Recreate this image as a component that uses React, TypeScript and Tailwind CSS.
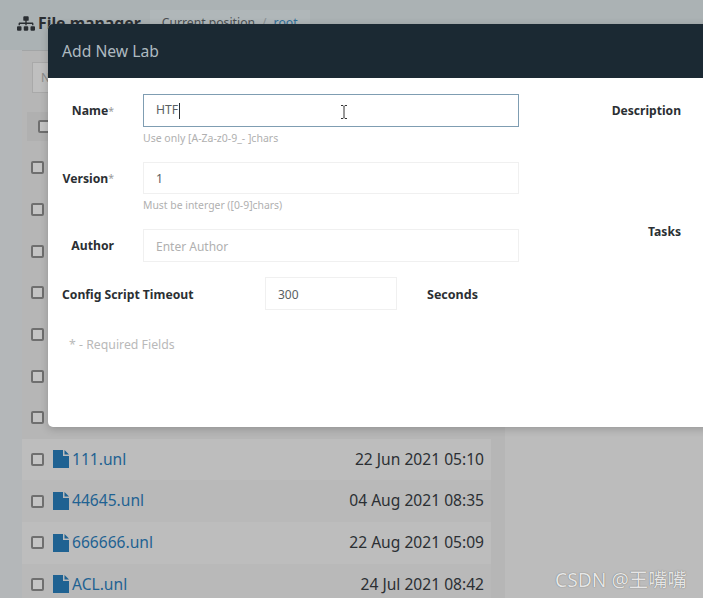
import { FaSitemap } from "react-icons/fa";

const files = [
  { name: "111.unl", date: "22 Jun 2021 05:10" },
  { name: "44645.unl", date: "04 Aug 2021 08:35" },
  { name: "666666.unl", date: "22 Aug 2021 05:09" },
  { name: "ACL.unl", date: "24 Jul 2021 08:42" },
];

function FileIcon() {
  return (
    <svg width="16" height="18" viewBox="0 0 16 18" className="shrink-0 fill-[#1f6292]">
      <path d="M0 0H10V6H16V18H0Z" />
      <path d="M11.5 0L16 4.5H11.5Z" />
    </svg>
  );
}

function Checkbox() {
  return <span className="block h-[13px] w-[13px] shrink-0 rounded-[2px] border-2 border-[#6f6f6f] bg-[#c4c4c4]" />;
}

function FieldLabel({ text, required }: { text: string; required?: boolean }) {
  return (
    <div className="flex h-[32px] w-[52px] shrink-0 items-center justify-end whitespace-nowrap pt-[2px] text-[12.2px] font-bold text-[#2b2f33]">
      {text}
      {required && <span className="text-[10.5px] font-normal text-[#9a9a9a]">*</span>}
    </div>
  );
}

export default function App() {
  return (
    <div className="relative h-[598px] w-[703px] overflow-hidden bg-[#b4b7b9] font-['Noto_Sans',sans-serif]">
      {/* page behind the dialog */}
      <div className="flex h-[50px] items-start gap-[9px] bg-[#abb2b4] pl-[17px] pt-[12px]">
        <div className="flex items-center gap-[3px] text-[#2a2e32]">
          <FaSitemap className="h-[17px] w-[18px]" />
          <span className="text-[15.8px] font-bold leading-[22px]">File manager</span>
        </div>
        <div className="-mt-[2px] flex h-[30px] gap-[7px] bg-[#b0b7b9] px-[12px] pt-[5px] text-[12.2px] leading-[16px] text-[#4a4f52]">
          <span>Current position</span>
          <span className="text-[#8b9194]">/</span>
          <span className="text-[#2f6f9b]">root</span>
        </div>
      </div>

      <div className="flex">
        <div className="ml-[22px] h-[548px] w-[483px] shrink-0 border-t border-[#a3a5a6] bg-[#b6b6b6] pr-[14px]">
          <div className="ml-[10px] mt-[11px] h-[31px] w-[40px] border border-[#a9a9a9] bg-[#bfbfbf] pl-2 text-[12px] leading-[29px] text-[#8a8a8a]">
            N
          </div>
          <div className="ml-[5px] mt-[19px] flex h-[29px] w-[40px] items-center border border-[#b0b0b0] bg-[#b0b0b0] pl-[10px]">
            <Checkbox />
          </div>
          <div className="mt-[6px] flex flex-col">
            {Array.from({ length: 7 }).map((_, i) => (
              <div key={i} className="flex h-[41.67px] items-center pl-[9px]">
                <Checkbox />
              </div>
            ))}
            {files.map((file, i) => (
              <div
                key={file.name}
                className={`flex h-[41.67px] items-center pl-[9px] pr-[7px] ${i % 2 === 0 ? "bg-[#bdbdbd]" : "bg-[#b9b9b9]"}`}
              >
                <Checkbox />
                <div className="ml-[9px] mr-[3px]">
                  <FileIcon />
                </div>
                <span className="text-[15.6px] text-[#1f6292]">{file.name}</span>
                <span className="ml-auto text-[15.6px] text-[#2b2f33]">{file.date}</span>
              </div>
            ))}
          </div>
        </div>
        <div className="h-[548px] flex-1 bg-[#bcbcbc]" />
      </div>

      {/* dialog */}
      <div className="absolute left-[48px] top-[24px] h-[403px] w-[800px] overflow-hidden rounded-l-[5px] bg-white shadow-[0_2px_8px_rgba(0,0,0,0.2)]">
        <div className="flex h-[54px] items-center bg-[#1b2933] pl-[14px] pt-px text-[15.7px] text-[#aebac0]">Add New Lab</div>
        <div className="flex pl-[14px] pt-[16px]">
          <div className="w-[457px] shrink-0">
            <div className="flex items-center gap-[29px]">
              <FieldLabel text="Name" required />
              <div className="relative flex h-[33px] w-[376px] items-center border border-[#7f9db2] pl-[12px] text-[12.2px] text-[#5a5f63]">
                HTF
                <span className="ml-px h-[16px] w-px bg-[#2b2f33]" />
                <svg width="8" height="14" viewBox="0 0 8 14" className="absolute left-[196px] top-[10px] fill-none stroke-[#333]">
                  <path d="M1 0.5H3L4 1.5L5 0.5H7M4 1.5V12.5M1 13.5H3L4 12.5L5 13.5H7" />
                </svg>
              </div>
            </div>
            <p className="ml-[81px] mt-[4px] text-[10.5px] leading-[14px] text-[#b0b0b0]">Use only [A-Za-z0-9_- ]chars</p>

            <div className="mt-[17px] flex gap-[29px]">
              <FieldLabel text="Version" required />
              <input
                readOnly
                value="1"
                className="h-[32px] w-[376px] border border-[#f0f0f0] pl-[12px] text-[12.2px] text-[#5a5f63] outline-none"
              />
            </div>
            <p className="ml-[81px] mt-[4px] text-[10.4px] leading-[14px] text-[#b0b0b0]">Must be interger ([0-9]chars)</p>

            <div className="mt-[17px] flex items-center gap-[29px]">
              <FieldLabel text="Author" />
              <input
                readOnly
                placeholder="Enter Author"
                className="h-[33px] w-[376px] border border-[#f0f0f0] pl-[12px] pt-px text-[12px] text-[#5a5f63] outline-none placeholder:text-[#b0b0b0]"
              />
            </div>

            <div className="mt-[15px] flex items-center">
              <span className="w-[203px] shrink-0 pt-[3px] text-[12.2px] font-bold text-[#2b2f33]">Config Script Timeout</span>
              <input
                readOnly
                value="300"
                className="h-[33px] w-[132px] border border-[#f0f0f0] pl-[12px] pt-px text-[12px] text-[#5a5f63] outline-none"
              />
              <span className="ml-[30px] pt-[3px] text-[12.5px] font-bold text-[#2b2f33]">Seconds</span>
            </div>

            <p className="ml-[7px] mt-[26px] text-[12.3px] leading-[18px] text-[#b9b9b9]">* - Required Fields</p>
          </div>

          <div className="w-[162px] pt-[8px] text-right text-[12.1px] font-bold leading-[18px] text-[#2b2f33]">
            <div>Description</div>
            <div className="mt-[103px]">Tasks</div>
          </div>
        </div>
      </div>

      {/* watermark */}
      <div className="absolute left-[555px] top-[567px] whitespace-nowrap font-['Noto_Sans','Noto_Sans_CJK_SC',sans-serif] text-[19.3px] leading-[26px] text-[#e6e6e6] [text-shadow:0_0_1px_rgba(0,0,0,0.55)]">
        CSDN @王嘴嘴
      </div>
    </div>
  );
}
